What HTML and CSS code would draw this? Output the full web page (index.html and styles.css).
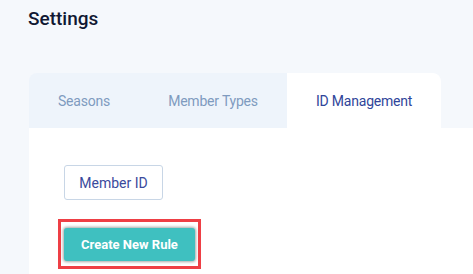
FILE: index.html
```html
<!DOCTYPE html>
<html lang="en">
<head>
    <meta charset="UTF-8">
    <title>Settings</title>
    <link rel="stylesheet" href="styles.css">
</head>
<body>
    <h1>Settings</h1>
    <div class="card">
        <div class="tabs">
            <div class="tab">Seasons</div>
            <div class="tab">Member Types</div>
            <div class="tab active">ID Management</div>
        </div>
        <div class="panel">
            <button class="chip">Member ID</button>
            <div class="highlight">
                <button class="create">Create New Rule</button>
            </div>
        </div>
    </div>
</body>
</html>
```
FILE: styles.css
```css
body {
    margin: 0;
    padding: 7px 0 0 28px;
    background: #f5f8fc;
    font-family: Roboto, "Liberation Sans", sans-serif;
    overflow: hidden;
}
h1 {
    margin: 0;
    font-size: 19px;
    font-weight: 500;
    color: #111833;
    line-height: 24px;
}
.card {
    margin-top: 42px;
    margin-left: 1px;
}
.tabs {
    display: flex;
    width: max-content;
    background: #eef4fb;
    border-radius: 8px 8px 0 0;
}
.tab {
    height: 55px;
    padding: 0 29px;
    display: flex;
    align-items: center;
    font-size: 14px;
    letter-spacing: -0.2px;
    color: #7f9bbf;
}
.active {
    background: #fff;
    color: #2f459a;
    border-radius: 0 8px 0 0;
}
.panel {
    background: #fff;
    padding: 37px 0 20px 35px;
    display: flex;
    flex-direction: column;
    align-items: flex-start;
    gap: 28px;
}
.chip {
    width: 99px;
    height: 35px;
    background: #fff;
    border: 1px solid #c8d6e6;
    border-radius: 3px;
    font-family: inherit;
    font-size: 14px;
    color: #3a4a9c;
}
.highlight {
    position: relative;
    display: flex;
}
/* annotation box drawn over the button */
.highlight::after {
    content: "";
    position: absolute;
    top: -9px;
    left: -6px;
    right: -6px;
    bottom: -8px;
    border: 3px solid #ee3f45;
}
.create {
    width: 131px;
    height: 33px;
    background: #3fc0c0;
    border: none;
    border-radius: 3px;
    color: #fff;
    font-family: inherit;
    font-size: 13px;
    font-weight: 700;
    box-shadow: 0 0 3px 1px rgba(0, 0, 0, 0.35);
}
```
